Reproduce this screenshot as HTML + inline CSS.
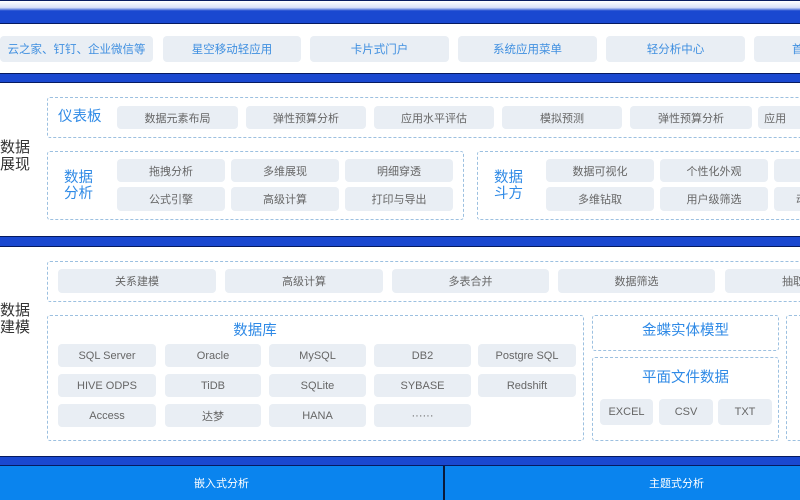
<!DOCTYPE html>
<html><head><meta charset="utf-8"><style>
*{margin:0;padding:0;box-sizing:border-box}
body{width:800px;height:500px;overflow:hidden;background:#fff;position:relative;font-family:"Liberation Sans","Noto Sans CJK SC",sans-serif}
.a{position:absolute}
.band{position:absolute;left:0;width:800px;background:#1a48d0;border-top:1px solid #061a60;border-bottom:1px solid #061a60}
.chip{position:absolute;background:#e9eef4;border-radius:4px;color:#666;font-size:11px;display:flex;align-items:center;justify-content:center;white-space:nowrap;overflow:hidden}
.top{color:#3f8fe0;font-size:11.5px;height:26px;top:36px}
.box{position:absolute;border:1px dashed #9cc0e0;border-radius:3px}
.bl{color:#2f8ae6;font-size:14.5px;position:absolute;line-height:16px}
.lab{position:absolute;left:0;font-size:15px;color:#333;line-height:17px}
</style></head><body>
<div class="band" style="top:0;height:24px;background:linear-gradient(#fff 0,#d8e0f8 30%,#1a48d0 45%,#1a48d0)"></div>
<div class="chip top" style="left:0;width:153px">云之家、钉钉、企业微信等</div>
<div class="chip top" style="left:163px;width:138px">星空移动轻应用</div>
<div class="chip top" style="left:310px;width:139px">卡片式门户</div>
<div class="chip top" style="left:458px;width:139px">系统应用菜单</div>
<div class="chip top" style="left:606px;width:139px">轻分析中心</div>
<div class="chip top" style="left:754px;width:60px;justify-content:flex-start;padding-left:38px">首页</div>
<div class="band" style="top:73px;height:10px"></div>

<div class="lab" style="top:139px">数据<br>展现</div>
<div class="box" style="left:47px;top:97px;width:770px;height:41px"></div>
<div class="bl" style="left:58px;top:109px">仪表板</div>
<div class="chip" style="left:117px;top:106px;width:121px;height:23px">数据元素布局</div>
<div class="chip" style="left:246px;top:106px;width:120px;height:23px">弹性预算分析</div>
<div class="chip" style="left:374px;top:106px;width:120px;height:23px">应用水平评估</div>
<div class="chip" style="left:502px;top:106px;width:120px;height:23px">模拟预测</div>
<div class="chip" style="left:630px;top:106px;width:122px;height:23px">弹性预算分析</div>
<div class="chip" style="left:758px;top:106px;width:60px;height:23px;justify-content:flex-start;padding-left:0">&nbsp;&nbsp;应用</div>

<div class="box" style="left:47px;top:151px;width:417px;height:69px"></div>
<div class="bl" style="left:64px;top:170px">数据<br>分析</div>
<div class="chip" style="left:117px;top:159px;width:108px;height:23px">拖拽分析</div>
<div class="chip" style="left:231px;top:159px;width:108px;height:23px">多维展现</div>
<div class="chip" style="left:345px;top:159px;width:108px;height:23px">明细穿透</div>
<div class="chip" style="left:117px;top:187px;width:108px;height:24px">公式引擎</div>
<div class="chip" style="left:231px;top:187px;width:108px;height:24px">高级计算</div>
<div class="chip" style="left:345px;top:187px;width:108px;height:24px">打印与导出</div>
<div class="box" style="left:477px;top:151px;width:340px;height:69px"></div>
<div class="bl" style="left:494px;top:170px">数据<br>斗方</div>
<div class="chip" style="left:546px;top:159px;width:108px;height:23px">数据可视化</div>
<div class="chip" style="left:660px;top:159px;width:108px;height:23px">个性化外观</div>
<div class="chip" style="left:774px;top:159px;width:40px;height:23px"></div>
<div class="chip" style="left:546px;top:187px;width:108px;height:24px">多维钻取</div>
<div class="chip" style="left:660px;top:187px;width:108px;height:24px">用户级筛选</div>
<div class="chip" style="left:774px;top:187px;width:40px;height:24px;justify-content:flex-start;padding-left:22px">动</div>
<div class="band" style="top:236px;height:11px"></div>

<div class="lab" style="top:302px">数据<br>建模</div>
<div class="box" style="left:47px;top:261px;width:770px;height:41px"></div>
<div class="chip" style="left:58px;top:269px;width:158px;height:24px">关系建模</div>
<div class="chip" style="left:225px;top:269px;width:158px;height:24px">高级计算</div>
<div class="chip" style="left:392px;top:269px;width:157px;height:24px">多表合并</div>
<div class="chip" style="left:558px;top:269px;width:157px;height:24px">数据筛选</div>
<div class="chip" style="left:725px;top:269px;width:90px;height:24px;justify-content:flex-start;padding-left:57px">抽取</div>

<div class="box" style="left:47px;top:315px;width:537px;height:126px"></div>
<div class="bl" style="left:205px;top:323px;width:100px;text-align:center">数据库</div>
<div class="chip" style="left:58px;top:344px;width:98px;height:23px">SQL Server</div>
<div class="chip" style="left:165px;top:344px;width:96px;height:23px">Oracle</div>
<div class="chip" style="left:269px;top:344px;width:97px;height:23px">MySQL</div>
<div class="chip" style="left:374px;top:344px;width:97px;height:23px">DB2</div>
<div class="chip" style="left:478px;top:344px;width:98px;height:23px">Postgre SQL</div>
<div class="chip" style="left:58px;top:374px;width:98px;height:23px">HIVE ODPS</div>
<div class="chip" style="left:165px;top:374px;width:96px;height:23px">TiDB</div>
<div class="chip" style="left:269px;top:374px;width:97px;height:23px">SQLite</div>
<div class="chip" style="left:374px;top:374px;width:97px;height:23px">SYBASE</div>
<div class="chip" style="left:478px;top:374px;width:98px;height:23px">Redshift</div>
<div class="chip" style="left:58px;top:404px;width:98px;height:23px">Access</div>
<div class="chip" style="left:165px;top:404px;width:96px;height:23px">达梦</div>
<div class="chip" style="left:269px;top:404px;width:97px;height:23px">HANA</div>
<div class="chip" style="left:374px;top:404px;width:97px;height:23px">······</div>

<div class="box" style="left:592px;top:315px;width:187px;height:36px"></div>
<div class="bl" style="left:592px;top:323px;width:187px;text-align:center">金蝶实体模型</div>
<div class="box" style="left:592px;top:357px;width:187px;height:84px"></div>
<div class="bl" style="left:592px;top:370px;width:187px;text-align:center">平面文件数据</div>
<div class="chip" style="left:600px;top:399px;width:53px;height:26px">EXCEL</div>
<div class="chip" style="left:659px;top:399px;width:54px;height:26px">CSV</div>
<div class="chip" style="left:718px;top:399px;width:54px;height:26px">TXT</div>
<div class="box" style="left:786px;top:315px;width:40px;height:126px"></div>

<div class="band" style="top:456px;height:10px"></div>
<div class="a" style="left:0;top:466px;width:800px;height:34px;background:#0a84ee"></div>
<div class="a" style="left:0;top:475px;width:443px;text-align:center;color:#fff;font-size:11px">嵌入式分析</div>
<div class="a" style="left:443px;top:475px;width:467px;text-align:center;color:#fff;font-size:11px">主题式分析</div>
<div class="a" style="left:443px;top:466px;width:2px;height:34px;background:#0a1a3a"></div>
</body></html>
